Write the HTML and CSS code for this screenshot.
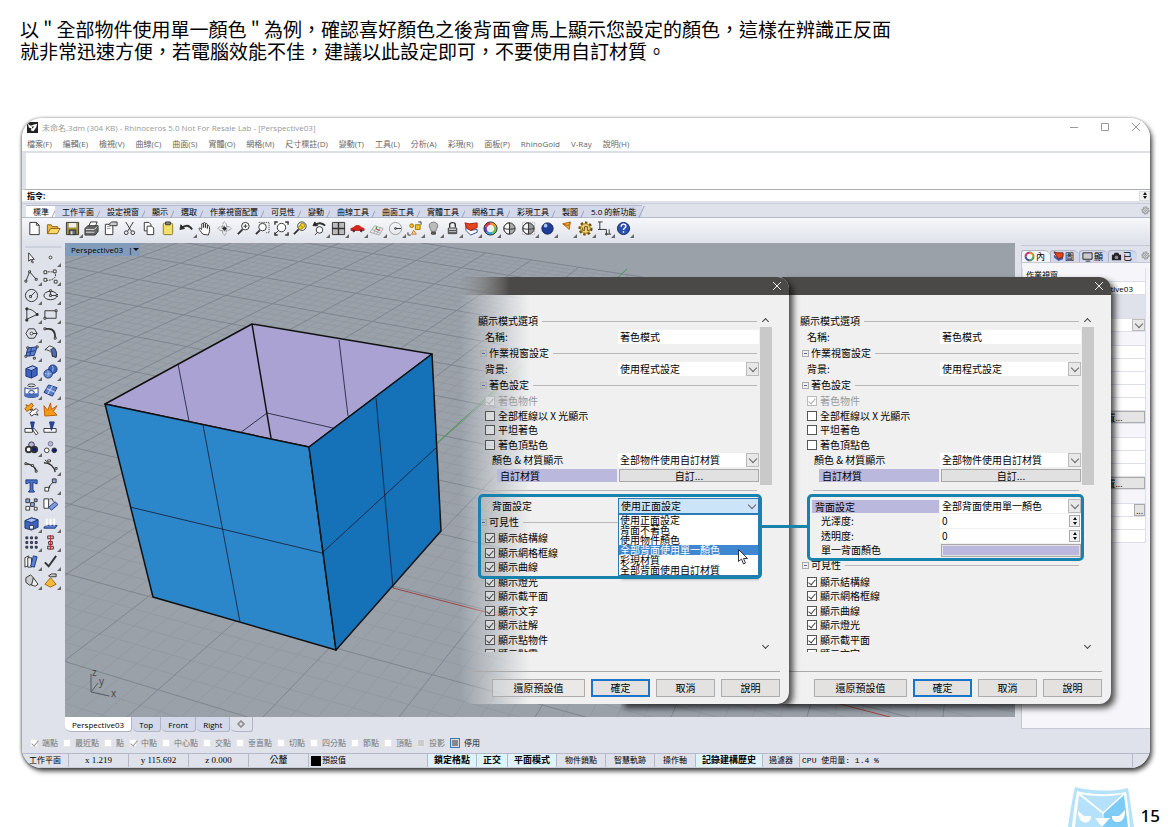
FILE: index.html
```html
<!DOCTYPE html>
<html lang="zh-Hant">
<head>
    <meta charset="UTF-8">
    <title>Rhinoceros 背面設定</title>
    <link rel="stylesheet" href="styles.css">
    <script src="grid.js" defer></script>
</head>
<body>
<p class="intro">以 " 全部物件使用單一顏色 " 為例，確認喜好顏色之後背面會馬上顯示您設定的顏色，這樣在辨識正反面<br>就非常迅速方便，若電腦效能不佳，建議以此設定即可，不要使用自訂材質。</p>

<div class="window">
    <div class="app">
        <!-- 標題列 -->
        <header class="title-bar">
            <svg class="app-icon" viewBox="0 0 12 12"><rect width="12" height="12" fill="#222"/><path d="M1 2l3 2 3-1 4-1-1 4-3 4-3-1 1-2-3-1z" fill="#fff"/><path d="M5 5l3 0-2 2z" fill="#222"/></svg>
            <span class="title">未命名.3dm (304 KB) - Rhinoceros 5.0 Not For Resale Lab - [Perspective03]</span>
            <div class="win-btns">
                <button aria-label="minimize"><svg viewBox="0 0 8 8"><path d="M0 4.500h8"/></svg></button>
                <button aria-label="maximize"><svg viewBox="0 0 8 8"><path d="M.5.5h7v7h-7z"/></svg></button>
                <button aria-label="close"><svg viewBox="0 0 8 8"><path d="M0 0l8 8M8 0L0 8"/></svg></button>
            </div>
        </header>
        <nav class="menu">
            <a href="#">檔案(F)</a><a href="#">編輯(E)</a><a href="#">檢視(V)</a><a href="#">曲線(C)</a><a href="#">曲面(S)</a><a href="#">實體(O)</a><a href="#">網格(M)</a><a href="#">尺寸標註(D)</a><a href="#">變動(T)</a><a href="#">工具(L)</a><a href="#">分析(A)</a><a href="#">彩現(R)</a><a href="#">面板(P)</a><a href="#">RhinoGold</a><a href="#">V-Ray</a><a href="#">說明(H)</a>
        </nav>
        <div class="history"></div>
        <div class="command">
            <label for="cmd">指令:</label><input id="cmd" type="text">
            <span class="spin"></span>
        </div>

        <!-- 工具列標籤 -->
        <div class="tool-tabs">
            <button class="on">標準</button><button>工作平面</button><button>設定視窗</button><button>顯示</button><button>選取</button><button>作業視窗配置</button><button>可見性</button><button>變動</button><button>曲線工具</button><button>曲面工具</button><button>實體工具</button><button>網格工具</button><button>彩現工具</button><button>製圖</button><button>5.0 的新功能</button>
            <svg class="gear" viewBox="0 0 10 10"><circle cx="5" cy="5" r="4" stroke-dasharray="2 1"/><circle cx="5" cy="5" r="3"/><circle cx="5" cy="5" r="1"/></svg>
        </div>
        <div class="toolbar">
            <button class="tool"><svg viewBox="0 0 16 16"><path d="M3 1.500h7l3 3v10H3z" fill="#fff"/><path d="M10 1.500v3h3"/></svg></button>
            <button class="tool"><svg viewBox="0 0 16 16"><path d="M1.500 13V4h4l1 2h6v2" fill="#e9b93a" stroke="#8a6414"/><path d="M1.500 13.500L5 8h10l-3 5.500z" fill="#ffd766" stroke="#8a6414"/></svg></button>
            <button class="tool more"><svg viewBox="0 0 16 16"><path d="M1.500 1.500h13v13h-13z" fill="#a3953c"/><path d="M4 2h8v5H4z" fill="#eee" stroke="none"/><path d="M4.500 9.500h7v5h-7z" fill="#667"/><path d="M6 11h2v3H6z" fill="#ddd" stroke="none"/></svg></button>
            <button class="tool"><svg viewBox="0 0 16 16"><path d="M5 6l2-5h7l-2 5" fill="#fff"/><path d="M1 8l3-3h11v6l-3 4H1z" fill="#666"/><path d="M2 9h9l3-3M2 12h9" stroke="#ddd"/></svg></button>
            <button class="tool"><svg viewBox="0 0 16 16"><path d="M2.500 3.500h8v11h-8z" fill="#fff"/><path d="M4 6h4M4 8h4" stroke="#999"/><path d="M6 4l3-3h6v4H9z" fill="#ccc"/></svg></button>
            <button class="tool"><svg viewBox="0 0 16 16"><path d="M4 1l6 10M12 1L6 11"/><circle cx="4.500" cy="12.500" r="2"/><circle cx="11.500" cy="12.500" r="2"/></svg></button>
            <button class="tool"><svg viewBox="0 0 16 16"><path d="M3.500 1.500h5l2 2v7h-7z" fill="#fff"/><path d="M6.500 5.500h5l2 2v7h-7z" fill="#fff"/></svg></button>
            <button class="tool"><svg viewBox="0 0 16 16"><rect x="3.500" y="2.500" width="10" height="12" rx="1" fill="#f3e06a" stroke="#8a7a20"/><path d="M6 1h5v3H6z" fill="#888"/></svg></button>
            <button class="tool more"><svg viewBox="0 0 16 16"><path d="M3 8c3-4 8-4 11 1" stroke-width="2"/><path d="M1 9l1-5 4 4z" fill="#222"/></svg></button>
            <button class="tool"><svg viewBox="0 0 16 16"><path d="M5 14C3 11 1 9 1 8c1-1 2 0 3 1V3c1-1 2 0 2 1v3-5c1-1 2 0 2 1v4-4c1-1 2 0 2 1v4-3c1-1 2 0 2 1 1 4 0 6-1 9z" fill="#fff"/></svg></button>
            <button class="tool"><svg viewBox="0 0 16 16"><ellipse cx="8" cy="8" rx="7" ry="2.500" stroke="#999" stroke-dasharray="4 1"/><ellipse cx="8" cy="8" rx="2.500" ry="7" stroke="#999" stroke-dasharray="4 1"/><path d="M8 6l2 2-2 2-2-2z" fill="#333"/></svg></button>
            <button class="tool"><svg viewBox="0 0 16 16"><circle cx="10" cy="5.500" r="4" fill="#fff"/><path d="M7 9l-5 5" stroke-width="2"/><path d="M8 5.500h4M10 3.500v4"/></svg></button>
            <button class="tool"><svg viewBox="0 0 16 16"><path d="M4 1.500h11v11h-3" stroke-dasharray="1 1"/><circle cx="8" cy="6.500" r="4" fill="#fff"/><path d="M5 10l-4 4" stroke-width="2"/></svg></button>
            <button class="tool"><svg viewBox="0 0 16 16"><circle cx="8" cy="7" r="4.500" fill="#fff"/><path d="M5 10l-4 4"/><path d="M1 4V1h3M12 1h3v3M15 12v3h-3M4 15H1v-3" stroke-width="1.500"/></svg></button>
            <button class="tool"><svg viewBox="0 0 16 16"><circle cx="9.500" cy="5.500" r="4.500" fill="#fff"/><circle cx="10" cy="5" r="2.500" fill="#f5d327" stroke="#a08a10"/><circle cx="8" cy="7" r="2" fill="#f5d327" stroke="#a08a10"/><path d="M6 9l-5 5" stroke-width="2"/></svg></button>
            <button class="tool more"><svg viewBox="0 0 16 16"><path d="M3 5c3-4 8-3 11 0" stroke-width="2"/><path d="M1 5l2-4 3 4z" fill="#222"/><circle cx="8" cy="9.500" r="3.500" fill="#fff"/><path d="M6 12l-3 3"/></svg></button>
            <button class="tool more"><svg viewBox="0 0 16 16"><path d="M1.500 1.500h13v13h-13z" fill="#bbb"/><path d="M8 1v14M1 8h14" stroke-width="1.500"/></svg></button>
            <button class="tool more"><svg viewBox="0 0 16 16"><path d="M1 8l3-1 2-2h4l2 2 3 1v2H1z" fill="#d8241c" stroke="#c02020"/><circle cx="4" cy="10.500" r="1" fill="#222"/><circle cx="12" cy="10.500" r="1" fill="#222"/></svg></button>
            <button class="tool more"><svg viewBox="0 0 16 16"><path d="M1 12l5-7 9 3-4 7zM3 9l9 4M8 6l-3 7M12 7l-4 7" stroke="#aaa"/><path d="M8 9V6" stroke="#2a9a2a"/><path d="M8 9l4 1" stroke="#c22"/></svg></button>
            <button class="tool more"><svg viewBox="0 0 16 16"><circle cx="8" cy="8" r="6.500" stroke="#999"/><path d="M8 8h6"/><circle cx="8" cy="8" r="1"/></svg></button>
            <button class="tool more"><svg viewBox="0 0 16 16"><circle cx="5" cy="5" r="2" fill="#f5c327" stroke="#a07000"/><path d="M9 4h5v5H9z" fill="#f5c327" stroke="#a07000"/><path d="M5 14l2-4 3 4z" fill="#ffe7b0" stroke="#c66a20"/><path d="M12 1h3v3M4 15H1v-3"/></svg></button>
            <button class="tool more"><svg viewBox="0 0 16 16"><path d="M5.500 11C5 8 3.500 7 3.500 5c0-5 9-5 9 0 0 2-1.500 3-2 6z" fill="#bbb" stroke="#777"/><path d="M6 12h4v2H6z" fill="#777"/></svg></button>
            <button class="tool more"><svg viewBox="0 0 16 16"><path d="M5 7V4c0-3 6-3 6 0v3" stroke-width="1.500"/><path d="M3.500 7.500h9v6h-9z" fill="#ddd"/><path d="M4 10h8M4 12h8"/></svg></button>
            <button class="tool more"><svg viewBox="0 0 16 16"><path d="M2 5l5 5 7-1v3l-7 3-5-5z" fill="#fff" stroke="#2b4a9a"/><path d="M1 2l5 1 8-1v5l-7 3-4-2z" fill="#e8441c" stroke="#a02010"/></svg></button>
            <button class="tool more"><svg viewBox="0 0 16 16"><g fill="none" stroke-width="3"><path d="M8 2.500a5.500 5.500 0 0 1 5 3.500" stroke="#e8a020"/><path d="M13 6a5.500 5.500 0 0 1-3 7" stroke="#6ac040"/><path d="M10 13a5.500 5.500 0 0 1-6-1" stroke="#30a0d0"/><path d="M4 12a5.500 5.500 0 0 1-1-6" stroke="#6040c0"/><path d="M3 6a5.500 5.500 0 0 1 5-3.500" stroke="#e03050"/></g><circle cx="8" cy="8" r="7"/></svg></button>
            <button class="tool"><svg viewBox="0 0 16 16"><circle cx="8" cy="8" r="6" fill="#aaa"/><path d="M8 2a6 6 0 0 0 0 12z" fill="#f4f4f4"/><path d="M8 2v12M2 8c3 1 9 1 12 0"/></svg></button>
            <button class="tool more"><svg viewBox="0 0 16 16"><path d="M1.500 1.500h13v13h-13z" stroke="#aaa" stroke-dasharray="1 1"/><circle cx="8" cy="8" r="6" fill="#999"/><path d="M8 2a6 6 0 0 0 0 12z" fill="#f4f4f4"/><path d="M2 8c3 1 9 1 12 0"/></svg></button>
            <button class="tool more"><svg viewBox="0 0 16 16"><circle cx="8" cy="8" r="6" fill="#1d3f9a" stroke="#0c1f55"/><circle cx="6" cy="5" r="2" fill="#a8c4f0" stroke="none"/></svg></button>
            <button class="tool more"><svg viewBox="0 0 16 16"><path d="M4 3l8-2-1 8z" fill="#f5b13a" stroke="#b06010"/><path d="M4 3l6 2 2-4" stroke="#b06010"/></svg></button>
            <button class="tool more"><svg viewBox="0 0 16 16"><circle cx="8" cy="8" r="6" fill="#f0d060" stroke="#6a5010" stroke-width="3" stroke-dasharray="2.500 2"/><circle cx="8" cy="8" r="5" fill="#f0d080" stroke="#a08020"/><path d="M5 7v3h2V6h3v4h2" stroke="#6a5010"/></svg></button>
            <button class="tool more"><svg viewBox="0 0 16 16"><path d="M3 1v8h7v5h5M1 1h5M1 9h3M13 9v5"/><circle cx="10" cy="14" r="1"/></svg></button>
            <button class="tool more"><svg viewBox="0 0 16 16"><circle cx="8" cy="8" r="6.500" fill="#2a50b0" stroke="#122a6a"/><path d="M5.500 6c0-3.500 5-3.500 5-.5 0 2-2.500 2-2.500 4M8 11v1.500" stroke="#fff" stroke-width="1.500"/></svg></button>
        </div>

        <div class="work">
            <div class="side">
                <button class="tool"><svg viewBox="0 0 16 16"><path d="M5 3v9l2-2 2 4 1-1-2-3h3z" fill="#fff"/></svg></button>
                <button class="tool more"><svg viewBox="0 0 16 16"><circle cx="8" cy="8" r="1.500" fill="#fff"/></svg></button>
                <button class="tool more"><svg viewBox="0 0 16 16"><path d="M2 13L6 3l7 8"/><path d="M1 12h2v2H1zM5 2h2v2H5zM12 10h2v2h-2z" fill="#fff"/></svg></button>
                <button class="tool more"><svg viewBox="0 0 16 16"><path d="M2 3h7c7 0 6 10-6 9" stroke-dasharray="2 1"/><path d="M1 2h3v3H1zM11 1h3v3h-3zM1 10h3v3H1zM12 12h3v3h-3z" fill="#fff"/></svg></button>
                <button class="tool more"><svg viewBox="0 0 16 16"><circle cx="8" cy="8" r="6.500"/><path d="M7 9l5-5"/><path d="M6 8h2v2H6z" fill="#fff"/></svg></button>
                <button class="tool more"><svg viewBox="0 0 16 16"><ellipse cx="8" cy="8" rx="7" ry="4.500"/><path d="M7 7h2v2H7zM7 2h2v2H7zM14 7h2v2h-2z" fill="#fff"/><path d="M8 4v3M9 8h5"/></svg></button>
                <button class="tool more"><svg viewBox="0 0 16 16"><path d="M3 13V2c4 0 8 2 11 6z"/><path d="M2 1h2v2H2zM13 7h2v2h-2zM2 13h2v2H2z" fill="#222"/></svg></button>
                <button class="tool more"><svg viewBox="0 0 16 16"><path d="M2 4h12v8H2z"/><path d="M1 11h2v2H1zM13 3h2v2h-2z" fill="#fff"/></svg></button>
                <button class="tool more"><svg viewBox="0 0 16 16"><path d="M5 3h6l3 5-3 5H5L2 8z"/><path d="M8 8h6"/><circle cx="8" cy="8" r="1.500" fill="#fff"/></svg></button>
                <button class="tool more"><svg viewBox="0 0 16 16"><path d="M2 3h4c5 0 7 3 7 9" stroke-width="2"/><path d="M1 2h2v2H1zM12 12h2v2h-2z" fill="#fff"/></svg></button>
                <button class="tool more"><svg viewBox="0 0 16 16"><path d="M4 3l10-1-3 9-9 1z" fill="#5c80cc" stroke="#203a80"/><path d="M8 3L6 12M3 8l9-2" stroke="#203a80"/><path d="M3 2h2v2H3zM13 1h2v2h-2zM1 11h2v2H1zM10 13h2v2h-2z" fill="#fff"/></svg></button>
                <button class="tool more"><svg viewBox="0 0 16 16"><path d="M2 5l5-4c5 1 8 5 7 12l-4-1c0-4-3-7-8-7z" fill="#e7ecf7"/><path d="M8 5l4-2c2 2 3 6 2 10l-4-1c0-3 0-5-2-7z" fill="#4a6ec0"/></svg></button>
                <button class="tool more"><svg viewBox="0 0 16 16"><path d="M2 5l7-3 5 2v8l-6 3-6-2z" fill="#3d64bd" stroke="#1d3577"/><path d="M2 5l6 2 6-3-5-2z" fill="#a9c0ee" stroke="#1d3577"/><path d="M8 7v8" stroke="#1d3577"/></svg></button>
                <button class="tool more"><svg viewBox="0 0 16 16"><circle cx="10.500" cy="5.500" r="4.500" fill="#3d64bd" stroke="#1d3577"/><circle cx="5.500" cy="10.500" r="4.500" fill="#5c80cc" stroke="#1d3577"/><path d="M5 7c1 2 1 5 0 7M2 10c2 1 5 1 7 0M10 2c1 2 1 4 0 6" stroke="#a9c0ee"/></svg></button>
                <button class="tool more"><svg viewBox="0 0 16 16"><ellipse cx="8" cy="2.500" rx="4" ry="1.500"/><path d="M1 5c4 2 10 2 14 0v9c-4 2-10 2-14 0z" fill="#fff" stroke="#203a80"/><path d="M1 11h14v4H1z" fill="#4a6ec0" stroke="none"/><ellipse cx="8" cy="10" rx="3" ry="2" fill="#dfe8fa" stroke="#203a80"/></svg></button>
                <button class="tool more"><svg viewBox="0 0 16 16"><path d="M6 2l9 3-5 9-9-4z" fill="#5c80cc" stroke="#203a80"/><path d="M10 3L5 12M4 6l9 4" stroke="#dfe8fa"/></svg></button>
                <button class="tool"><svg viewBox="0 0 16 16"><path d="M2 3l3 1 3-3 2 3-2 2 2 3-4-1-3 2-2-3 2-2z" fill="#f5a31a" stroke="#a05a00"/><path d="M7 8l3 1 3-2 2 2-2 2 2 3-4-1-3 2-2-3 2-2z" fill="#fff"/></svg></button>
                <button class="tool"><svg viewBox="0 0 16 16"><path d="M2 15L1 4l4 5 3-8 1 7 6-4-4 6 4 4z" fill="#f59a1a" stroke="#c05a00"/></svg></button>
                <button class="tool"><svg viewBox="0 0 16 16"><path d="M1 8h8v4H1z" fill="#fff"/><path d="M9 9l2-1 4 5-2 2z" fill="#fff"/><path d="M7 1h4L9 10z" fill="#2a4aa0" stroke="#1d3577"/></svg></button>
                <button class="tool"><svg viewBox="0 0 16 16"><path d="M1 8h13v4H1z" fill="#fff"/><path d="M7 1h5l-3 9z" fill="#2a4aa0" stroke="#1d3577"/></svg></button>
                <button class="tool more"><svg viewBox="0 0 16 16"><circle cx="8" cy="5" r="3" fill="#b9b4dd"/><circle cx="5" cy="10" r="3" fill="#fff" stroke-width="2"/><circle cx="11" cy="10" r="3" fill="#10207a" stroke-width="2"/></svg></button>
                <button class="tool"><svg viewBox="0 0 16 16"><circle cx="8" cy="4" r="2.500" fill="#b9b4dd" stroke="#778"/><circle cx="4" cy="11" r="2.500" fill="#fff"/><circle cx="12" cy="11" r="2.500" fill="#10207a"/></svg></button>
                <button class="tool"><svg viewBox="0 0 16 16"><path d="M1 5c6 0 11 3 12 8" stroke-width="1.500"/><path d="M1 4h2v2H1zM8 6h2v2H8zM12 12h2v2h-2z" fill="#fff"/></svg></button>
                <button class="tool more"><svg viewBox="0 0 16 16"><path d="M1 4c6 0 11 4 12 10" stroke-width="1.500"/><path d="M2 1l6 5"/><path d="M5 1h3v2H5zM13 9h2v2h-2z" fill="#fff"/></svg></button>
                <button class="tool"><svg viewBox="0 0 16 16"><path d="M2 2h12v4h-2l-1-1H9.500v8l1.500 1v1H5v-1l1.500-1V5H5L4 6H2z" fill="#4a74cc" stroke="#1d3577"/></svg></button>
                <button class="tool more"><svg viewBox="0 0 16 16"><path d="M2 10h4v4H2z" fill="#fff"/><path d="M10 1h4v4h-4z" fill="#8aa6e0"/><path d="M6 10l4-5M7 8v3"/></svg></button>
                <button class="tool"><svg viewBox="0 0 16 16"><path d="M2 2h4v4H2zM7 6h4v4H7zM11 2h3v3h-3z" fill="#8aa6e0"/><path d="M2 10h4v4H2zM11 11h3v3h-3z" fill="#fff"/></svg></button>
                <button class="tool"><svg viewBox="0 0 16 16"><path d="M1 2h5v10H1z" fill="#fff"/><path d="M7 2h3l1 3"/><path d="M6 11l7-6 3 3-7 6z" fill="#7d9be0" stroke="#203a80"/></svg></button>
                <button class="tool more"><svg viewBox="0 0 16 16"><path d="M1 5l7-3 7 2v8l-7 3-7-2z" fill="#3d64bd" stroke="#1d3577"/><path d="M1 5l7-3 7 2-7 3z" fill="#a9c0ee" stroke="#1d3577"/><path d="M6 10h4v4H6z" fill="#fff"/></svg></button>
                <button class="tool more"><svg viewBox="0 0 16 16"><path d="M1 12l3-2h11l-2 3H1z" fill="#5c80cc" stroke="#203a80"/><path d="M4 10V3M8 10V3M12 10V3" stroke="#fff" stroke-width="2"/></svg></button>
                <button class="tool more"><svg viewBox="0 0 16 16"><path d="M2 2h2v2H2zM7 2h2v2H7zM12 2h2v2h-2zM2 7h2v2H2zM7 7h2v2H7zM12 7h2v2h-2zM2 12h2v2H2zM7 12h2v2H7zM12 12h2v2h-2z" fill="#5c80cc" stroke="#223"/></svg></button>
                <button class="tool more"><svg viewBox="0 0 16 16"><path d="M5 1h6v3H5zM6 7h4v3H6zM5 12h6v3H5z" fill="#ccc"/><path d="M8 0v16" stroke="#d02030" stroke-width="1"/></svg></button>
                <button class="tool more"><svg viewBox="0 0 16 16"><path d="M1 4l4-2v10l-4 2z" fill="#fff"/><path d="M4 4h4v10H4z" fill="#eee"/><path d="M10 2l4 1-3 11-4-1z" fill="#5c80cc" stroke="#203a80"/></svg></button>
                <button class="tool more"><svg viewBox="0 0 16 16"><path d="M2 9l4 4 8-11" stroke-width="2"/></svg></button>
                <button class="tool more"><svg viewBox="0 0 16 16"><path d="M2 5l5-3 3 3v6l-4 2-4-3z" fill="#ccc"/><path d="M8 13l2-8 5 7-3 2z" fill="#eee"/></svg></button>
                <button class="tool more"><svg viewBox="0 0 16 16"><path d="M2 12l6-7 6 7-6 3z" fill="#f5b93a" stroke="#a06a10"/><path d="M6 3l3-2h5v3H8z" fill="#ccc"/></svg></button>
            </div>

            <div class="viewport">
                <svg class="scene" viewBox="65 243 950 474" preserveAspectRatio="xMinYMin slice">
                    <g id="minor" class="minor"></g>
                    <g id="major" class="major"></g>
                    <path d="M393 588L890 717" stroke="#a04444"/>
                    <path d="M436 444L627 269" stroke="#3f9a4a"/>
                    <!-- 內側 -->
                    <path class="face" d="M105 404L252 324 432 354 309 447z" fill="#a9a2d2"/>
                    <path class="thin" d="M178 364L189 421M339 340L348 416M267 413L240 433M267 413L333 428"/>
                    <path class="edge" d="M252 324L271 438"/>
                    <!-- 外側 -->
                    <path class="face" d="M105 404L309 447 336 650 153 597z" fill="#2c86ca"/>
                    <path class="face" d="M309 447L432 354 441 531 336 650z" fill="#1571b8"/>
                    <path class="thin" d="M203 425L240 622M130 507L322 553M322 553L437 447M376 398L393 588"/>
                    <g class="axis"><path d="M91 674V692L109 696M91 692L98 683"/><text x="92" y="676">z</text><text x="99" y="685">y</text><text x="111" y="697">x</text></g>
                </svg>
                <button class="view-name">Perspective03 <span>|</span><i></i></button>
            </div>

            <aside class="panel">
                <div class="panel-tabs">
                    <button class="on"><svg viewBox="0 0 12 12"><g fill="none" stroke-width="2"><path d="M6 2a4 4 0 0 1 4 4" stroke="#e8a020"/><path d="M10 6a4 4 0 0 1-4 4" stroke="#4ab040"/><path d="M6 10a4 4 0 0 1-4-4" stroke="#3050c0"/><path d="M2 6a4 4 0 0 1 4-4" stroke="#e03070"/></g><circle cx="6" cy="6" r="5" fill="none" stroke="#333" stroke-width=".5"/></svg>內</button>
                    <button><svg viewBox="0 0 12 12"><path d="M1 4l5 4 5-2v3l-5 2-5-4z" fill="#4060b0"/><path d="M1 1l4 1 6 0v4l-5 3z" fill="#e8441c" stroke="#702010"/></svg>圖</button>
                    <button><svg viewBox="0 0 12 12"><path d="M1 2h10v7H1z" fill="#ccc" stroke="#222"/><path d="M4 11h5" stroke="#222"/></svg>顯</button>
                    <button><svg viewBox="0 0 12 12"><path d="M1 4h2l1-2h4l1 2h2v6H1z" fill="#222"/><circle cx="6" cy="7" r="2" fill="#889"/></svg>已</button>
                    <svg class="gear" viewBox="0 0 10 10"><circle cx="5" cy="5" r="4" stroke-dasharray="2 1"/><circle cx="5" cy="5" r="3"/><circle cx="5" cy="5" r="1"/></svg>
                </div>
                <div class="props">
                    <div class="prop head">作業視窗</div>
                    <div class="prop value">Perspective03</div>
                    <div class="prop gap"></div>
                    <div class="prop pick"><i class="chev"></i></div>
                    <div class="prop head"></div>
                    <div class="prop"></div>
                    <div class="prop"></div>
                    <div class="prop"></div>
                    <div class="prop"></div>
                    <div class="prop"></div>
                    <div class="prop"><button>設置...</button></div>
                    <div class="prop head"></div>
                    <div class="prop"></div>
                    <div class="prop"></div>
                    <div class="prop"></div>
                    <div class="prop"><button>設置...</button></div>
                    <div class="prop head"></div>
                    <div class="prop"><button class="dots">...</button></div>
                    <div class="prop"></div>
                    <div class="prop"></div>
                </div>
            </aside>
        </div>

        <div class="view-tabs">
            <button class="on">Perspective03</button><button>Top</button><button>Front</button><button>Right</button><button class="add" aria-label="add"><svg viewBox="0 0 8 8"><path d="M3 1h2v2h2v2H5v2H3V5H1V3h2z"/></svg></button>
        </div>
        <div class="osnap">
            <label><input type="checkbox" checked>端點</label>
            <label><input type="checkbox">最近點</label>
            <label><input type="checkbox">點</label>
            <label><input type="checkbox" checked>中點</label>
            <label><input type="checkbox">中心點</label>
            <label><input type="checkbox">交點</label>
            <label><input type="checkbox">垂直點</label>
            <label><input type="checkbox">切點</label>
            <label><input type="checkbox">四分點</label>
            <label><input type="checkbox">節點</label>
            <label><input type="checkbox">頂點</label>
            <label><input class="flat" type="checkbox">投影</label>
            <label class="stop"><input class="filled" type="checkbox">停用</label>
        </div>
        <footer class="status">
            <span class="w-plane">工作平面</span><span class="w-num">x 1.219</span><span class="w-num">y 115.692</span><span class="w-num">z 0.000</span><span class="w-num">公釐</span><span class="w-layer"><i></i>預設值</span><button class="on">鎖定格點</button><button class="on">正交</button><button class="on">平面模式</button><button>物件鎖點</button><button>智慧軌跡</button><button>操作軸</button><button class="on">記錄建構歷史</button><button class="tight">過濾器</button><span class="cpu">CPU 使用量: 1.4 %</span>
        </footer>
    </div>

    <!-- 右側設定視窗 -->
    <section class="dialog result">
        <header><button class="close" aria-label="close"><svg viewBox="0 0 8 8"><path d="M0 0l8 8M8 0L0 8"/></svg></button></header>
        <div class="body">
            <div class="form">
                <h3 class="first">顯示模式選項</h3>
                <div class="row"><label for="name2">名稱:</label><input id="name2" type="text" value="著色模式"></div>
                <h3><i></i>作業視窗設定</h3>
                <div class="row"><label for="bg2">背景:</label><span class="combo"><select id="bg2"><option>使用程式設定</option></select><i class="chev"></i></span></div>
                <h3><i></i>著色設定</h3>
                <div class="checks shade">
                    <label class="off"><input type="checkbox" checked disabled>著色物件</label>
                    <label><input type="checkbox">全部框線以 X 光顯示</label>
                    <label><input type="checkbox">平坦著色</label>
                    <label><input type="checkbox">著色頂點色</label>
                </div>
                <div class="row"><label class="in" for="mat2">顏色 &amp; 材質顯示</label><span class="combo"><select id="mat2"><option>全部物件使用自訂材質</option></select><i class="chev"></i></span></div>
                <div class="row short"><span class="mark">自訂材質</span><button>自訂...</button></div>
                <hr>
                <div class="row"><label class="mark wide" for="back2">背面設定</label><span class="combo"><select id="back2"><option>全部背面使用單一顏色</option></select><i class="chev"></i></span></div>
                <div class="single">
                    <div class="row short"><label class="in2" for="gloss">光澤度:</label><span class="num"><input id="gloss" type="text" value="0"><i class="spin"></i></span></div>
                    <div class="row short"><label class="in2" for="alpha">透明度:</label><span class="num"><input id="alpha" type="text" value="0"><i class="spin"></i></span></div>
                    <div class="row short"><label class="in2" for="color">單一背面顏色</label><button id="color" class="color"></button></div>
                </div>
                <h3><i></i>可見性</h3>
                <div class="checks six">
                    <label><input type="checkbox" checked>顯示結構線</label>
                    <label><input type="checkbox" checked>顯示網格框線</label>
                    <label><input type="checkbox" checked>顯示曲線</label>
                    <label><input type="checkbox" checked>顯示燈光</label>
                    <label><input type="checkbox" checked>顯示截平面</label>
                    <label><input type="checkbox" checked>顯示文字</label>
                </div>
            </div>
            <div class="scroll"><i class="up"></i><b></b><i class="down"></i></div>
        </div>
        <footer><button class="reset">還原預設值</button><button class="ok">確定</button><button>取消</button><button>說明</button></footer>
        <div class="callout"></div>
    </section>

    <!-- 左側設定視窗 -->
    <section class="dialog fade">
        <header><button class="close" aria-label="close"><svg viewBox="0 0 8 8"><path d="M0 0l8 8M8 0L0 8"/></svg></button></header>
        <div class="body">
            <div class="form">
                <h3 class="first">顯示模式選項</h3>
                <div class="row"><label for="name1">名稱:</label><input id="name1" type="text" value="著色模式"></div>
                <h3><i></i>作業視窗設定</h3>
                <div class="row"><label for="bg1">背景:</label><span class="combo"><select id="bg1"><option>使用程式設定</option></select><i class="chev"></i></span></div>
                <h3><i></i>著色設定</h3>
                <div class="checks shade">
                    <label class="off"><input type="checkbox" checked disabled>著色物件</label>
                    <label><input type="checkbox">全部框線以 X 光顯示</label>
                    <label><input type="checkbox">平坦著色</label>
                    <label><input type="checkbox">著色頂點色</label>
                </div>
                <div class="row"><label class="in" for="mat1">顏色 &amp; 材質顯示</label><span class="combo"><select id="mat1"><option>全部物件使用自訂材質</option></select><i class="chev"></i></span></div>
                <div class="row short"><span class="mark">自訂材質</span><button>自訂...</button></div>
                <hr>
                <div class="row"><label class="in" for="back1">背面設定</label><span class="combo open"><select id="back1"><option>使用正面設定</option></select><i class="chev"></i>
                    <ul class="options">
                        <li>使用正面設定</li>
                        <li>背面不著色</li>
                        <li>使用物件顏色</li>
                        <li class="hover">全部背面使用單一顏色</li>
                        <li>彩現材質</li>
                        <li>全部背面使用自訂材質</li>
                    </ul></span></div>
                <h3><i></i>可見性</h3>
                <div class="checks nine">
                    <label><input type="checkbox" checked>顯示結構線</label>
                    <label><input type="checkbox" checked>顯示網格框線</label>
                    <label><input type="checkbox" checked>顯示曲線</label>
                    <label><input type="checkbox" checked>顯示燈光</label>
                    <label><input type="checkbox" checked>顯示截平面</label>
                    <label><input type="checkbox" checked>顯示文字</label>
                    <label><input type="checkbox" checked>顯示註解</label>
                    <label><input type="checkbox" checked>顯示點物件</label>
                    <label><input type="checkbox" checked>顯示點雲</label>
                </div>
            </div>
            <div class="scroll"><i class="up"></i><b></b><i class="down"></i></div>
        </div>
        <footer><button class="reset">還原預設值</button><button class="ok">確定</button><button>取消</button><button>說明</button></footer>
        <div class="callout"></div>
        <svg class="cursor" viewBox="0 0 10 16"><path d="M.5.5v12l3-2.500 2 5 2-1-2-4.500h4z" fill="#fff" stroke="#334"/></svg>
    </section>
</div>

<div class="page-foot">
    <svg class="owl" viewBox="0 0 66 41">
        <path d="M7 1c14 4 38 5 53 1 2 12 4 26 6 39H0C2 27 4 14 7 1z" fill="#b5e2fa"/>
        <path d="M9 5c14 4 34 4 49 1 2 12 3 24 4 35H4C5 28 7 16 9 5z" fill="#fff"/>
        <path d="M11 9l24 19-2 13H7z" fill="#b5e2fa"/>
        <path d="M56 9L35 28l-2 13h27z" fill="#7cccf5"/>
        <path d="M13 8c14 3 28 3 42 0L35 26z" fill="#b5e2fa"/>
        <path d="M11 8l24 19L56 8" fill="none" stroke="#fff"/>
        <path d="M35 26v6" stroke="#fff"/>
        <path d="M27 32h15l-8 9zM10 25c0 16 14 13 13 5l-7 0zM57 24c1 16-14 14-13 6l7 0z" fill="#fff"/>
    </svg>
    <span>15</span>
</div>
</body>
</html>
```
FILE: styles.css
```css
* {
    margin: 0;
    padding: 0;
    box-sizing: border-box;
}
body {
    background: #fff;
    color: #000;
    font-family: "Open Sans", "Noto Sans CJK TC", sans-serif;
    font-size: 10px;
    overflow: hidden;
}
button, input, select {
    font: inherit;
    color: inherit;
    border: 0;
    background: none;
    min-width: 0;
    outline: none;
}
input, select, button.close {appearance: none;}
a {color: inherit; text-decoration: none;}
ul {list-style: none;}
svg {display: block;}
.intro {
    height: 118px;
    padding: 18px 20px 0;
    font: 19px/22px "Noto Sans CJK TC", sans-serif;
    white-space: nowrap;
}

/* 主視窗 */
.window {
    position: relative;
    margin: 0 20px 0 22px;
    border-radius: 20px;
    box-shadow: 2px 3px 5px rgba(0,0,0,.75), -1px 0 3px rgba(0,0,0,.4);
}
.app {
    border-radius: 20px;
    overflow: hidden;
    background: #dfe2ea;
}
.title-bar {
    display: flex;
    align-items: center;
    height: 18px;
    padding: 0 10px 0 5px;
    background: #fff;
    color: #999;
    font-size: 8px;
}
.app-icon {width: 11px; height: 11px; margin-right: 4px;}
.title {flex: 1; white-space: nowrap;}
.win-btns {display: flex; gap: 23px;}
.win-btns svg {width: 8px; height: 8px; fill: none; stroke: #999;}
.menu {
    display: flex;
    gap: 11px;
    height: 17px;
    padding-left: 5px;
    border-bottom: 2px solid #dcdfe6;
    background: #fff;
    color: #666;
    font-size: 8px;
    line-height: 16px;
    white-space: nowrap;
}
.history {
    height: 37px;
    border-left: 4px solid #dfe2ea;
    border-bottom: 1px solid #aaaebb;
    background: #fff;
}
.command {
    display: flex;
    align-items: center;
    height: 11px;
    padding-left: 5px;
    background: #fff;
    font-size: 8px;
    font-weight: bold;
    line-height: 10px;
}
.command input {flex: 1;}
.spin {
    width: 11px;
    height: 10px;
    border: 1px solid #ddd;
    background: #f0f0f0;
    display: flex;
    flex-direction: column;
    align-items: center;
    justify-content: space-around;
}
.spin::before, .spin::after {
    content: "";
    border: 2px solid transparent;
}
.spin::before {border-bottom: 3px solid #111; border-top: 0;}
.spin::after {border-top: 3px solid #111; border-bottom: 0;}
.tool-tabs {
    display: flex;
    height: 15px;
    margin-top: 2px;
    padding: 1px 0 0 4px;
    border-top: 1px solid #c9cdd8;
    border-bottom: 1px solid #b4bacb;
    font-size: 8px;
}
.tool-tabs button {
    position: relative;
    padding: 0 6px 0 7px;
    border-top: 1px solid #b4bacb;
    background: #d3d8eb;
    line-height: 11px;
    white-space: nowrap;
}
.tool-tabs button::after {
    content: "";
    position: absolute;
    top: 0;
    right: 0;
    width: 1px;
    height: 12px;
    background: #9aa2b8;
    transform: skewX(-25deg);
}
.tool-tabs .on {background: #fff;}
.gear {width: 9px; height: 9px; margin: 1px 0 0 auto; fill: none; stroke: #888;}
.toolbar {
    display: flex;
    height: 25px;
    padding: 1px 0 0 4px;
    background: linear-gradient(#f6f7fa, #dfe2ea);
}
.tool {position: relative; width: 19px; height: 19px; flex: none;}
.tool svg {width: 15px; height: 15px; margin: 1px; fill: none; stroke: #333;}
.more::after {
    content: "";
    position: absolute;
    right: 0;
    bottom: 0;
    border: 2px solid #666;
    border-top-color: transparent;
    border-left-color: transparent;
}

/* 工作區 */
.work {display: flex; height: 474px;}
.side {
    display: grid;
    grid-template-columns: 19px 19px;
    align-content: start;
    width: 43px;
    padding: 3px 0 0 1px;
}
.side::before {
    content: "";
    grid-column: 1 / 3;
    height: 2px;
    margin-left: 2px;
    background: #cdd1dc;
}
.viewport {position: relative; flex: 1; background: #9aa1a9; overflow: hidden;}
.scene {width: 100%; height: 100%;}
.minor {stroke: #858c97; stroke-width: 1; opacity: .35;}
.major {stroke: #747b86; stroke-width: 1; opacity: .7;}
.face {stroke: #111; stroke-width: 1.5; stroke-linejoin: round;}
.edge {stroke: #111; stroke-width: 1.5;}
.thin {fill: none; stroke: #151a30; stroke-width: .8;}
.axis {fill: none; stroke: #555b63;}
.axis text {fill: #444; stroke: none; font-size: 10px;}
.view-name {
    position: absolute;
    top: 0;
    left: 0;
    display: flex;
    align-items: center;
    height: 13px;
    padding: 0 1px 0 6px;
    background: #809cba;
    font-size: 8px;
}
.view-name span {margin-left: 5px;}
.view-name i {border: 3px solid transparent; border-top: 3px solid #111; border-bottom: 0;}
.panel {
    width: 135px;
    height: 486px;
    margin-bottom: -12px;
    padding-top: 2px;
    display: flex;
    flex-direction: column;
}
.panel-tabs {
    display: flex;
    height: 17px;
    margin-left: 6px;
    padding-top: 4px;
    border-top: 1px solid #c3c8d4;
    font-size: 9px;
    line-height: 11px;
}
.panel-tabs button {
    display: flex;
    align-items: center;
    width: 29px;
    padding-left: 2px;
    border-left: 1px solid #b0b6c8;
    border-top: 1px solid #b0b6c8;
    border-radius: 3px 6px 0 0;
    background: #d3d8eb;
}
.panel-tabs button svg {width: 11px; height: 11px; margin-right: 1px;}
.panel-tabs .on {background: #f6f6fa;}
.props {
    flex: 1;
    margin-left: 6px;
    padding: 5px 4px 0 0;
    border: 1px solid #c3c8d4;
    border-right: 0;
    background: #f6f6fa;
}
.prop {
    display: flex;
    justify-content: flex-end;
    align-items: center;
    height: 13px;
    border: 1px solid #dcdfe8;
    border-top: 0;
    background: #fff;
    font-size: 9px;
}
.prop.head {height: 14px; justify-content: flex-start; padding-left: 3px; background: #f6f6fa; font-size: 8px;}
.prop.value {padding-right: 12px; font-size: 8px;}
.prop.gap {height: 24px; background: #dfe2ea;}
.prop button {width: 70px; height: 12px; border: 1px solid #aaa; background: #e4e4e4; line-height: 9px;}
.prop .dots {width: 11px;}
.view-tabs {
    display: flex;
    height: 15px;
    width: max-content;
    padding-left: 43px;
    font-size: 8px;
    line-height: 13px;
}
.view-tabs button {
    padding: 0 7px;
    border-right: 1px solid #b0b6c8;
    border-bottom: 1px solid #b0b6c8;
    border-radius: 0 0 3px 6px;
    background: #d3d8eb;
}
.view-tabs .on {background: #fff;}
.view-tabs .add {background: #dfe2ea;}
.view-tabs svg {width: 8px; height: 8px; fill: none; stroke: #777;}
.osnap {
    display: flex;
    gap: 5px;
    height: 21px;
    padding-left: 8px;
    align-items: center;
    color: #777;
    font-size: 8px;
    white-space: nowrap;
}
.osnap label {display: flex; align-items: center; gap: 4px;}
.osnap input {position: relative; width: 8px; height: 8px; background: #fff; border: 1px solid #e6e6e6;}
.osnap .flat {background: #ccc;}
.osnap .filled {width: 10px; height: 10px; border: 1px solid #3b78b5; background: #888; box-shadow: inset 0 0 0 1px #ddd;}
.osnap .stop {color: #111;}
input:checked::after {
    content: "";
    position: absolute;
    top: 0;
    left: 2px;
    width: 3px;
    height: 6px;
    border: solid #444;
    border-width: 0 1px 1px 0;
    transform: rotate(40deg);
}
.osnap input:checked::after {top: -1px; border-color: #999;}
.status {
    display: flex;
    height: 15px;
    border-top: 1px solid #b4bacb;
    border-bottom: 1px solid #c9cdd8;
    font: 8px/13px "Liberation Serif", "Noto Sans CJK TC", serif;
    white-space: nowrap;
}
.status span, .status button {
    padding: 0 8px;
    border-right: 1px solid #b4bacb;
    text-align: center;
}
.status .on {padding: 0 6px; background: #dff3fa; font-size: 9px; font-weight: bold;}
.status .tight {padding: 0 6px;}
.status .w-plane {width: 47px; padding: 0 6px;}
.status .w-num {width: 60px; font-size: 9px;}
.status .w-layer {display: flex; align-items: center; gap: 1px; width: 119px; padding: 0 2px;}
.w-layer i {width: 10px; height: 10px; background: #000;}
.status .cpu {flex: 1; margin-right: 17px; padding: 0 2px; text-align: left; font-family: "Liberation Mono", "Noto Sans CJK TC", monospace;}

/* 設定對話框 */
.dialog {
    position: absolute;
    top: 159px;
    width: 329px;
    font-family: "Noto Sans CJK TC", sans-serif;
}
.dialog.result {
    right: 39px;
    border-radius: 0 12px 12px 0;
    background: #f0f0f0;
    box-shadow: 4px 4px 6px rgba(0,0,0,.7);
}
.dialog.fade {
    right: 361px;
    isolation: isolate;
    border-radius: 12px;
    background: linear-gradient(to right, rgba(240,240,240,0), #f0f0f0 70px);
}
.dialog.fade::before {
    content: "";
    position: absolute;
    z-index: -1;
    inset: 0 0 0 160px;
    border-radius: 0 12px 12px 0;
    box-shadow: 4px 4px 6px rgba(0,0,0,.7);
    clip-path: inset(0 -14px -14px 0);
}
.dialog header {
    display: flex;
    justify-content: flex-end;
    align-items: center;
    height: 18px;
    padding-right: 8px;
    border-radius: 0 12px 0 0;
    background: #4b4947;
}
.dialog.fade header {background: linear-gradient(to right, rgba(75,73,71,0), #4b4947 50px);}
.close svg {width: 8px; height: 8px; fill: none; stroke: #eee;}
.dialog .body {display: flex; padding: 18px 17px 0 18px;}
.form {width: 281px; height: 339px; overflow: hidden; line-height: 14px;}
.form h3 {
    display: flex;
    align-items: center;
    gap: 2px;
    height: 16px;
    padding-left: 2px;
    font-size: 10px;
    font-weight: normal;
    white-space: nowrap;
}
.form h3.first {padding-left: 0;}
.form h3::after {content: ""; flex: 1; height: 1px; margin: 0 2px; background: #b8b8b8;}
.form h3 i {width: 7px; height: 7px; border: 1px solid #aaa; background: linear-gradient(#56a, #56a) center / 3px 1px no-repeat;}
.row {
    display: grid;
    grid-template-columns: 1fr 141px;
    align-items: center;
    height: 16px;
    padding-left: 7px;
}
.row.short {height: 14px;}
.row > input, .combo, .num {height: 14px; padding: 0 2px; background: #fff;}
.row > button {
    height: 13px;
    margin-left: 1px;
    border: 1px solid #a8a8a8;
    background: #e1e1e1;
    line-height: 11px;
}
.row .in {padding-left: 7px;}
.row .in2 {padding-left: 14px;}
.mark {height: 13px; margin: 0 1px 0 12px; padding-left: 3px; background: #bbb8dd; line-height: 13px;}
.mark.wide {margin-left: 5px;}
.combo, .num {position: relative; display: flex; padding-right: 0;}
.combo select, .num input {flex: 1; line-height: 14px;}
.chev {
    display: flex;
    align-items: center;
    justify-content: center;
    width: 13px;
    border: 1px solid #bbb;
    background: #e8e8e8;
}
.chev::before {
    content: "";
    width: 5px;
    height: 5px;
    margin-top: -3px;
    border: solid #666;
    border-width: 0 1px 1px 0;
    transform: rotate(45deg);
}
.prop .chev {height: 12px;}
.combo.open {height: 16px; border: 1px solid #2b7ab8; background: #cce4f7;}
.open .chev {border: 0; background: none;}
.options {
    position: absolute;
    z-index: 1;
    top: 15px;
    left: -1px;
    right: -1px;
    border: 1px solid #2b7ab8;
    background: #fff;
    box-shadow: 4px 3px 3px rgba(0,0,0,.4);
}
.options li {height: 10px; padding-left: 1px; line-height: 10px; white-space: nowrap;}
.options .hover {background: #3f87d0; color: #fff;}
.color {padding: 2px; background: #bbb8dd !important; box-shadow: inset 0 0 0 1px #e1e1e1;}
.num .spin {height: 12px; margin: 1px 1px 0 0; border-color: #aaa;}
.checks {display: grid; align-content: space-between; padding-left: 7px;}
.checks label {display: flex; align-items: center; gap: 3px; height: 14px; white-space: nowrap;}
.checks input {position: relative; width: 10px; height: 10px; border: 1px solid #555; background: #fff;}
.checks .off {color: #999;}
.checks .off input {border-color: #bbb;}
.checks .off input::after {border-color: #aaa;}
.shade {height: 58px; margin-top: 1px;}
.nine {height: 130px; margin-top: 1px;}
.six {height: 86px; margin-top: 2px;}
.single {display: grid; align-content: space-between; height: 43px;}
.form hr {height: 1px; margin: 8px 2px 7px 13px; border: 0; background: #b8b8b8;}
.fade input[type=checkbox] {background: rgba(255,255,255,.4);}
.scroll {
    display: flex;
    flex-direction: column;
    align-items: center;
    width: 13px;
    padding: 6px 0 4px;
}
.scroll b {width: 12px; height: 158px; margin: 3px 0 auto; background: #c9c9c9;}
.scroll i {width: 5px; height: 5px; border: solid #444; border-width: 0 1px 1px 0; transform: rotate(45deg);}
.scroll .up {transform: rotate(225deg);}
.dialog footer {
    display: flex;
    justify-content: flex-end;
    gap: 6px;
    margin: 19px 9px 0 6px;
    padding: 7px 0;
    border-top: 1px solid #aaa;
}
.dialog footer button {width: 59px; height: 18px; border: 1px solid #adadad; background: #e4e2e0; line-height: 14px;}
.dialog footer .reset {width: 93px;}
.dialog footer .ok {border: 2px solid #1b74c8;}
.fade footer .reset {background: rgba(228,226,224,.5);}
.callout {
    position: absolute;
    z-index: 2;
    top: 217px;
    left: 18px;
    width: 284px;
    height: 85px;
    border: 3px solid #1782ab;
    border-radius: 5px;
}
.result .callout {left: 25px; width: 277px; height: 67px;}
.fade .callout::after {
    content: "";
    position: absolute;
    top: 28px;
    left: 281px;
    width: 46px;
    height: 3px;
    background: #1782ab;
}
.cursor {position: absolute; z-index: 3; top: 272px; left: 278px; width: 10px; height: 16px;}

/* 頁尾 */
.page-foot {
    display: flex;
    justify-content: flex-end;
    gap: 7px;
    margin-top: 18px;
    padding-right: 10px;
    font: 500 17px/60px "Noto Sans", sans-serif;
    height: 41px;
}
.owl {width: 66px; height: 41px;}
```
FILE: grid.js
```js
// 透視格線：兩組線各自收斂到消失點
const VP1 = {x: -3100, y: -300};
const VP2 = {x: 1021, y: -71};

function addLine(id, x1, y1, x2, y2) {
    const line = document.createElementNS('http://www.w3.org/2000/svg', 'line');
    line.setAttribute('x1', x1);
    line.setAttribute('y1', y1);
    line.setAttribute('x2', x2);
    line.setAttribute('y2', y2);
    document.getElementById(id).appendChild(line);
}

for (let k = -60; k <= 100; k += 2) {
    const y = -124 + 1 / (.001595 + .0000161 * k);
    const slope = (y - VP1.y) / (65 - VP1.x);
    addLine(k % 10 ? 'minor' : 'major', 65, y, 1015, y + slope * 950);
}
for (let k = -160; k <= 60; k += 2) {
    const x = 127 + 13.6 * k;
    const slope = (717 - VP2.y) / (x - VP2.x);
    // 與最遠格線的交點
    const endX = (244 - .154 * 428 - 717 + slope * x) / (slope - .154);
    addLine(k % 10 ? 'minor' : 'major', x, 717, endX, 717 + slope * (endX - x));
}
```
